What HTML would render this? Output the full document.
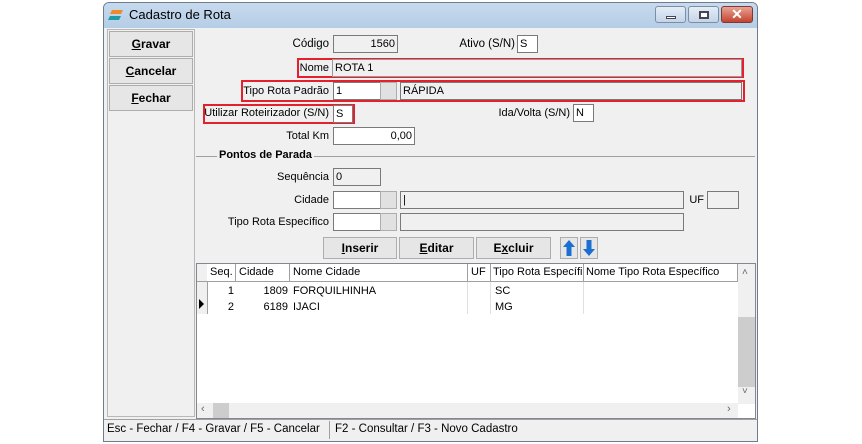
<!DOCTYPE html><html><head><meta charset="utf-8"><style>
*{box-sizing:border-box}
body{margin:0;width:862px;height:444px;background:#fff;position:relative;overflow:hidden;font-family:"Liberation Sans",sans-serif;font-size:11px;color:#000}
.a{position:absolute}
.win{left:103px;top:2px;width:655px;height:440px;background:#f0f0f0;border:1px solid #6f7c8c;border-radius:6px 6px 0 0}
.title{left:104px;top:3px;width:653px;height:25px;background:linear-gradient(#c7daee,#b5cde6);border-radius:5px 5px 0 0}
.in{position:absolute;background:#fff;border:1px solid #7a7a7a;height:18px;padding:1px 2px;line-height:15px;white-space:nowrap}
.ro{background:#f0f0f0}
.lbl{position:absolute;text-align:right;line-height:18px;white-space:nowrap}
.red{position:absolute;border:2px solid #e3202b}
.btn{position:absolute;background:#e6e6e6;border:1px solid #adadad;font-weight:bold;text-align:center;line-height:22px;font-size:12px}
.gh{position:absolute;top:0;height:18px;border-right:1px solid #a0a0a0;border-bottom:1px solid #a0a0a0;padding-left:3px;line-height:17px;background:#fff;white-space:nowrap;overflow:hidden}
.r{position:absolute;line-height:16px;white-space:nowrap}
</style></head><body>
<div class="a win"></div>
<div class="a title"></div>
<svg class="a" style="left:108px;top:9px" width="16" height="13"><path d="M4 1h11l-2 4H2z" fill="#f08a24"/><path d="M2 7h11l-2 4H0z" fill="#1e9aa8"/></svg>
<div class="a" style="left:129px;top:7px;font-size:13px;color:#000">Cadastro de Rota</div>
<div class="a" style="left:655px;top:6px;width:31px;height:17px;border:1px solid #7d8ea3;border-radius:3px;background:linear-gradient(#e4edf7,#c4d4e7)"><div class="a" style="left:10px;top:9px;width:10px;height:3px;background:#fff;border:1px solid #445"></div></div>
<div class="a" style="left:688px;top:6px;width:31px;height:17px;border:1px solid #7d8ea3;border-radius:3px;background:linear-gradient(#e4edf7,#c4d4e7)"><div class="a" style="left:10px;top:4px;width:10px;height:8px;border:2px solid #445;background:#fff"></div></div>
<div class="a" style="left:721px;top:6px;width:32px;height:17px;border:1px solid #7a3b33;border-radius:3px;background:linear-gradient(#e8a394,#c4432f);color:#fff;font-weight:bold;text-align:center;line-height:15px;font-size:14px">✕</div>
<div class="a" style="left:107px;top:29px;width:88px;height:388px;border:1px solid #b8b8b8"></div>
<div class="btn" style="left:109px;top:31px;width:84px;height:26px;line-height:24px"><u>G</u>ravar</div>
<div class="btn" style="left:109px;top:58px;width:84px;height:26px;line-height:24px"><u>C</u>ancelar</div>
<div class="btn" style="left:109px;top:85px;width:84px;height:26px;line-height:24px"><u>F</u>echar</div>
<div class="lbl" style="left:230px;top:35px;width:99px;font-size:11.5px">Código</div>
<div class="in ro" style="left:333px;top:35px;width:65px;text-align:right">1560</div>
<div class="lbl" style="left:420px;top:35px;width:95px;font-size:11.5px">Ativo (S/N)</div>
<div class="in" style="left:517px;top:35px;width:21px">S</div>
<div class="red" style="left:297px;top:58px;width:447px;height:20px"></div>
<div class="lbl" style="left:270px;top:59px;width:59px">Nome</div>
<div class="in ro" style="left:332px;top:59px;width:410px;border-color:#999">ROTA 1</div>
<div class="red" style="left:241px;top:80px;width:504px;height:22px"></div>
<div class="lbl" style="left:220px;top:82px;width:109px">Tipo Rota Padrão</div>
<div class="in" style="left:333px;top:82px;width:48px">1</div>
<div class="a" style="left:380px;top:82px;width:17px;height:18px;background:#e1e1e1;border:1px solid #adadad"></div>
<div class="in ro" style="left:400px;top:82px;width:342px">RÁPIDA</div>
<div class="red" style="left:203px;top:104px;width:152px;height:20px"></div>
<div class="lbl" style="left:180px;top:104px;width:149px">Utilizar Roteirizador (S/N)</div>
<div class="in" style="left:333px;top:105px;width:20px">S</div>
<div class="lbl" style="left:460px;top:104px;width:110px">Ida/Volta (S/N)</div>
<div class="in" style="left:573px;top:104px;width:21px">N</div>
<div class="lbl" style="left:230px;top:127px;width:99px">Total Km</div>
<div class="in" style="left:333px;top:127px;width:82px;text-align:right">0,00</div>
<div class="a" style="left:196px;top:156px;width:559px;height:1px;background:#a0a0a0"></div>
<div class="a" style="left:217px;top:149px;padding:0 2px;background:#f0f0f0;font-weight:bold">Pontos de Parada</div>
<div class="lbl" style="left:230px;top:168px;width:99px">Sequência</div>
<div class="in ro" style="left:333px;top:168px;width:48px">0</div>
<div class="lbl" style="left:230px;top:191px;width:99px">Cidade</div>
<div class="in" style="left:333px;top:191px;width:48px"></div>
<div class="a" style="left:380px;top:191px;width:17px;height:18px;background:#e1e1e1;border:1px solid #adadad"></div>
<div class="in ro" style="left:400px;top:191px;width:284px">|</div>
<div class="lbl" style="left:680px;top:191px;width:24px">UF</div>
<div class="in ro" style="left:707px;top:191px;width:32px"></div>
<div class="lbl" style="left:180px;top:213px;width:149px">Tipo Rota Específico</div>
<div class="in" style="left:333px;top:213px;width:48px"></div>
<div class="a" style="left:380px;top:213px;width:17px;height:18px;background:#e1e1e1;border:1px solid #adadad"></div>
<div class="in ro" style="left:400px;top:213px;width:284px"></div>
<div class="btn" style="left:323px;top:237px;width:74px;height:22px;line-height:20px"><u>I</u>nserir</div>
<div class="btn" style="left:399px;top:237px;width:75px;height:22px;line-height:20px"><u>E</u>ditar</div>
<div class="btn" style="left:476px;top:237px;width:75px;height:22px;line-height:20px">E<u>x</u>cluir</div>
<div class="a" style="left:560px;top:237px;width:18px;height:22px;background:#e6e6e6;border:1px solid #adadad"><svg width="16" height="20"><path d="M8 2l6 7h-3.5v9h-5V9H2z" fill="#1b6fd1"/></svg></div>
<div class="a" style="left:580px;top:237px;width:18px;height:22px;background:#e6e6e6;border:1px solid #adadad"><svg width="16" height="20"><path d="M8 18l6-7h-3.5V2h-5v9H2z" fill="#1b6fd1"/></svg></div>
<div class="a" style="left:196px;top:263px;width:560px;height:156px;background:#fff;border:1px solid #828790;overflow:hidden">
<div class="gh" style="left:0;width:11px;background:#f0f0f0"></div>
<div class="gh" style="left:10px;width:29px">Seq.</div>
<div class="gh" style="left:39px;width:54px">Cidade</div>
<div class="gh" style="left:93px;width:178px">Nome Cidade</div>
<div class="gh" style="left:271px;width:23px">UF</div>
<div class="gh" style="left:294px;width:93px;padding-left:2px">Tipo Rota Específico</div>
<div class="gh" style="left:387px;width:154px;padding-left:2px">Nome Tipo Rota Específico</div>
<div class="a" style="left:0;top:18px;width:11px;height:32px;background:#f0f0f0;border-right:1px solid #a0a0a0"></div>
<div class="a" style="left:2px;top:35px;width:0;height:0;border-left:5px solid #000;border-top:5px solid transparent;border-bottom:5px solid transparent"></div>
<div class="a" style="left:270px;top:18px;width:1px;height:32px;background:#e0e0e0"></div>
<div class="a" style="left:293px;top:18px;width:1px;height:32px;background:#e0e0e0"></div>
<div class="a" style="left:386px;top:18px;width:1px;height:32px;background:#e0e0e0"></div>
<div class="r" style="left:10px;top:19px;width:27px;text-align:right">1</div>
<div class="r" style="left:39px;top:19px;width:52px;text-align:right">1809</div>
<div class="r" style="left:96px;top:19px">FORQUILHINHA</div>
<div class="r" style="left:298px;top:19px">SC</div>
<div class="r" style="left:10px;top:35px;width:27px;text-align:right">2</div>
<div class="r" style="left:39px;top:35px;width:52px;text-align:right">6189</div>
<div class="r" style="left:96px;top:35px">IJACI</div>
<div class="r" style="left:298px;top:35px">MG</div>
<div class="a" style="left:541px;top:0;width:17px;height:140px;background:#f0f0f0"></div>
<div class="a" style="left:541px;top:53px;width:17px;height:70px;background:#cdcdcd"></div>
<div class="a" style="left:545px;top:3px;font-size:10px;color:#666">˄</div>
<div class="a" style="left:545px;top:122px;font-size:10px;color:#666">˅</div>
<div class="a" style="left:0;top:139px;width:541px;height:16px;background:#f0f0f0"></div>
<div class="a" style="left:16px;top:139px;width:16px;height:16px;background:#cdcdcd"></div>
<div class="a" style="left:4px;top:139px;color:#666">‹</div>
<div class="a" style="left:530px;top:139px;color:#666">›</div>
</div>
<div class="a" style="left:104px;top:419px;width:653px;height:1px;background:#a0a0a0"></div>
<div class="a" style="left:107px;top:423px;font-size:11.5px">Esc - Fechar / F4 - Gravar / F5 - Cancelar</div>
<div class="a" style="left:329px;top:421px;width:1px;height:18px;background:#a0a0a0"></div>
<div class="a" style="left:335px;top:423px;font-size:11.5px">F2 - Consultar / F3 - Novo Cadastro</div>
</body></html>
